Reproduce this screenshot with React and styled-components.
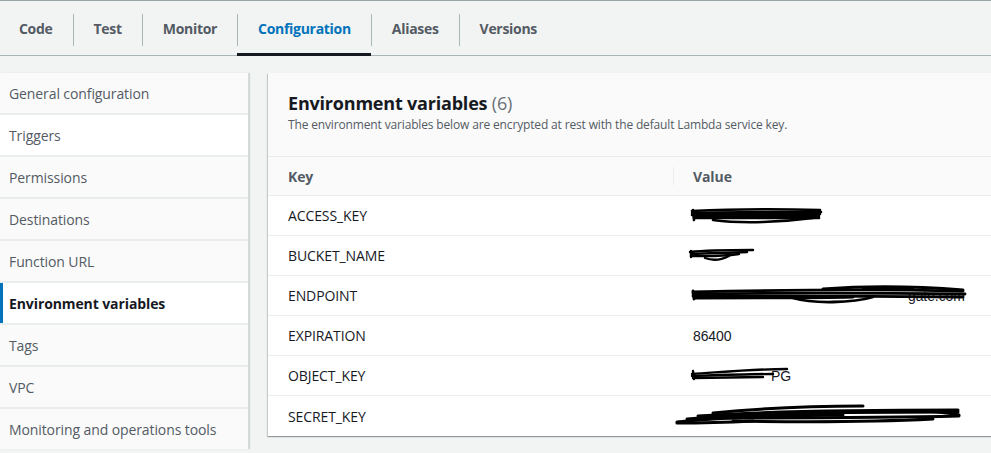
import React from "react";
import styled, { createGlobalStyle } from "styled-components";

const Global = createGlobalStyle`
  html, body { margin: 0; padding: 0; background: #f2f3f3; }
  body { font-family: "Open Sans", "Noto Sans", Arial, sans-serif; -webkit-font-smoothing: antialiased; }
  * { box-sizing: border-box; }
`;

const Page = styled.div`
  width: 991px;
  height: 453px;
  overflow: hidden;
  background: #f2f3f3;
  border-top: 1px solid #95a5a6;
`;

const TabBar = styled.nav`
  display: flex;
  height: 55px;
  border-bottom: 1px solid #aab7b8;
`;

const Tab = styled.div`
  position: relative;
  display: flex;
  align-items: center;
  padding: 0 20px 0 ${(p) => (p.$first ? "19px" : "21px")};
  font-size: 14px;
  font-weight: 700;
  color: ${(p) => (p.$active ? "#0073bb" : "#545b64")};
  letter-spacing: -0.3px;
  &::before {
    content: "";
    display: ${(p) => (p.$first ? "none" : "block")};
    position: absolute;
    left: 0;
    top: 13px;
    height: 32px;
    width: 1px;
    background: #aab7b8;
  }
  &::after {
    content: "";
    display: ${(p) => (p.$active ? "block" : "none")};
    position: absolute;
    left: 0;
    right: 0;
    bottom: -1px;
    height: 3px;
    background: #16191f;
  }
`;

const Body = styled.div`
  display: flex;
  gap: 20px;
  padding-top: 17px;
  align-items: flex-start;
`;

const Sidebar = styled.ul`
  list-style: none;
  margin: 0;
  padding: 0;
  width: 248px;
  flex-shrink: 0;
  display: flex;
  flex-direction: column;
  gap: 2px;
  background: #eaeded;
  box-shadow: 1px 0 0 #d5dbdb, 2px 0 1px rgba(0, 28, 36, 0.12);
`;

const NavItem = styled.li`
  position: relative;
  height: 40px;
  display: flex;
  align-items: center;
  padding-left: 9px;
  font-size: 14px;
  letter-spacing: -0.1px;
  font-weight: ${(p) => (p.$active ? 700 : 400)};
  color: ${(p) => (p.$active ? "#16191f" : "#545b64")};
  background: ${(p) => (p.$white ? "#ffffff" : "#fafafa")};
  &::before {
    content: "";
    display: ${(p) => (p.$active ? "block" : "none")};
    position: absolute;
    left: 0;
    top: 0;
    bottom: 0;
    width: 3px;
    background: #0073bb;
  }
`;

const Card = styled.section`
  width: 760px;
  flex-shrink: 0;
  background: #fff;
  box-shadow: 0 1px 1px 0 rgba(0, 28, 36, 0.3), -1px 1px 1px 0 rgba(0, 28, 36, 0.15);
`;

const CardHeader = styled.header`
  height: 84px;
  padding: 18px 20px 0;
  background: #fafafa;
  border-bottom: 1px solid #eaeded;
`;

const Title = styled.h2`
  margin: 0;
  font-size: 18px;
  line-height: 24px;
  font-weight: 700;
  color: #16191f;
  letter-spacing: -0.2px;
`;

const Count = styled.span`
  font-weight: 400;
  color: #687078;
`;

const Description = styled.p`
  margin: 2px 0 0;
  font-size: 12px;
  line-height: 16px;
  color: #545b64;
  letter-spacing: -0.15px;
`;

const Row = styled.div`
  display: grid;
  grid-template-columns: 405px 1fr;
  height: ${(p) => (p.$head ? "39px" : "40px")};
  background: ${(p) => (p.$head ? "#fafafa" : "#fff")};
  border-bottom: ${(p) => (p.$last ? "none" : "1px solid #eaeded")};
`;

const Cell = styled.div`
  position: relative;
  display: flex;
  align-items: center;
  padding-left: 20px;
  font-size: 14px;
  letter-spacing: -0.1px;
  font-weight: ${(p) => (p.$head ? 700 : 400)};
  color: ${(p) => (p.$head ? "#545b64" : "#16191f")};
  ${(p) =>
    p.$divider &&
    `&::before { content: ""; position: absolute; left: 0; top: 10px; bottom: 10px; width: 1px; background: #eaeded; }`}
`;

const ValueText = styled.span`
  font-family: "Liberation Sans", Arial, sans-serif;
  font-size: 14px;
  color: #16191f;
  padding-left: ${(p) => p.$offset || 0}px;
`;

const Scribble = styled.svg`
  position: absolute;
  left: 0;
  top: 0;
  overflow: visible;
  pointer-events: none;
`;

const scribbles = {
  ACCESS_KEY: {
    w: 2.6,
    paths: [
      "M19 15 C60 13 110 13 147 14",
      "M19 17 C60 16 110 16 148 16",
      "M19 19 C60 18 110 18 147 18",
      "M21 21 C60 20 110 20 146 20",
      "M22 22 L146 22",
      "M40 24 C70 28 110 26 140 22",
      "M20 14 L21 24",
    ],
  },
  BUCKET_NAME: {
    w: 2.4,
    paths: [
      "M17 16 C35 14 60 14 80 14",
      "M19 18 C35 17 55 17 74 16",
      "M18 20 C30 20 45 21 66 18",
      "M32 22 C40 25 48 24 56 20",
      "M18 15 L18 21",
    ],
  },
  ENDPOINT: {
    w: 2.8,
    text: "gate.com",
    offset: 215,
    paths: [
      "M20 16 C100 14 200 13 290 15",
      "M20 18 C100 17 200 17 292 18",
      "M20 20 C100 20 200 20 290 21",
      "M22 22 C80 22 140 22 180 21",
      "M150 13 C190 10 240 10 290 14",
      "M190 12 C200 12 220 12 240 13",
      "M120 22 C140 28 180 27 200 21",
      "M20 15 L21 23",
    ],
  },
  OBJECT_KEY: {
    w: 2.4,
    text: "PG",
    offset: 78,
    paths: [
      "M19 18 C50 16 80 13 114 13",
      "M19 20 C50 19 80 18 100 18",
      "M20 22 L90 21",
      "M20 15 L21 23",
    ],
  },
  SECRET_KEY: {
    w: 3,
    paths: [
      "M4 26 C40 22 100 20 170 19",
      "M14 23 C60 18 150 16 285 16",
      "M25 20 C80 16 150 14 285 14",
      "M40 17 C90 12 150 10 190 10",
      "M30 22 C100 22 200 22 286 20",
      "M60 25 C120 26 200 26 260 23",
      "M200 15 C240 14 270 15 286 19",
      "M4 27 C30 27 60 26 80 25",
    ],
  },
};

function RedactedValue({ name }) {
  const s = scribbles[name];
  return (
    <>
      {s.text && <ValueText $offset={s.offset}>{s.text}</ValueText>}
      <Scribble width="320" height="40" viewBox="0 0 320 40">
        {s.paths.map((d, i) => (
          <path key={i} d={d} stroke="#000" strokeWidth={s.w} fill="none" strokeLinecap="round" />
        ))}
      </Scribble>
    </>
  );
}

const rows = ["ACCESS_KEY", "BUCKET_NAME", "ENDPOINT", "EXPIRATION", "OBJECT_KEY", "SECRET_KEY"];

const nav = [
  "General configuration",
  "Triggers",
  "Permissions",
  "Destinations",
  "Function URL",
  "Environment variables",
  "Tags",
  "VPC",
  "Monitoring and operations tools",
];

const tabs = ["Code", "Test", "Monitor", "Configuration", "Aliases", "Versions"];

export default function App() {
  return (
    <>
      <Global />
      <Page>
        <TabBar>
          {tabs.map((t, i) => (
            <Tab key={t} $first={i === 0} $active={t === "Configuration"}>
              {t}
            </Tab>
          ))}
        </TabBar>
        <Body>
          <Sidebar>
            {nav.map((n) => (
              <NavItem
                key={n}
                $active={n === "Environment variables"}
                $white={n === "Triggers" || n === "Environment variables"}
              >
                {n}
              </NavItem>
            ))}
          </Sidebar>
          <Card>
            <CardHeader>
              <Title>
                Environment variables <Count>(6)</Count>
              </Title>
              <Description>
                The environment variables below are encrypted at rest with the default Lambda service key.
              </Description>
            </CardHeader>
            <Row $head>
              <Cell $head>Key</Cell>
              <Cell $head $divider>
                Value
              </Cell>
            </Row>
            {rows.map((r, i) => (
              <Row key={r} $last={i === rows.length - 1}>
                <Cell>{r}</Cell>
                <Cell>
                  {r === "EXPIRATION" ? <ValueText>86400</ValueText> : <RedactedValue name={r} />}
                </Cell>
              </Row>
            ))}
          </Card>
        </Body>
      </Page>
    </>
  );
}
